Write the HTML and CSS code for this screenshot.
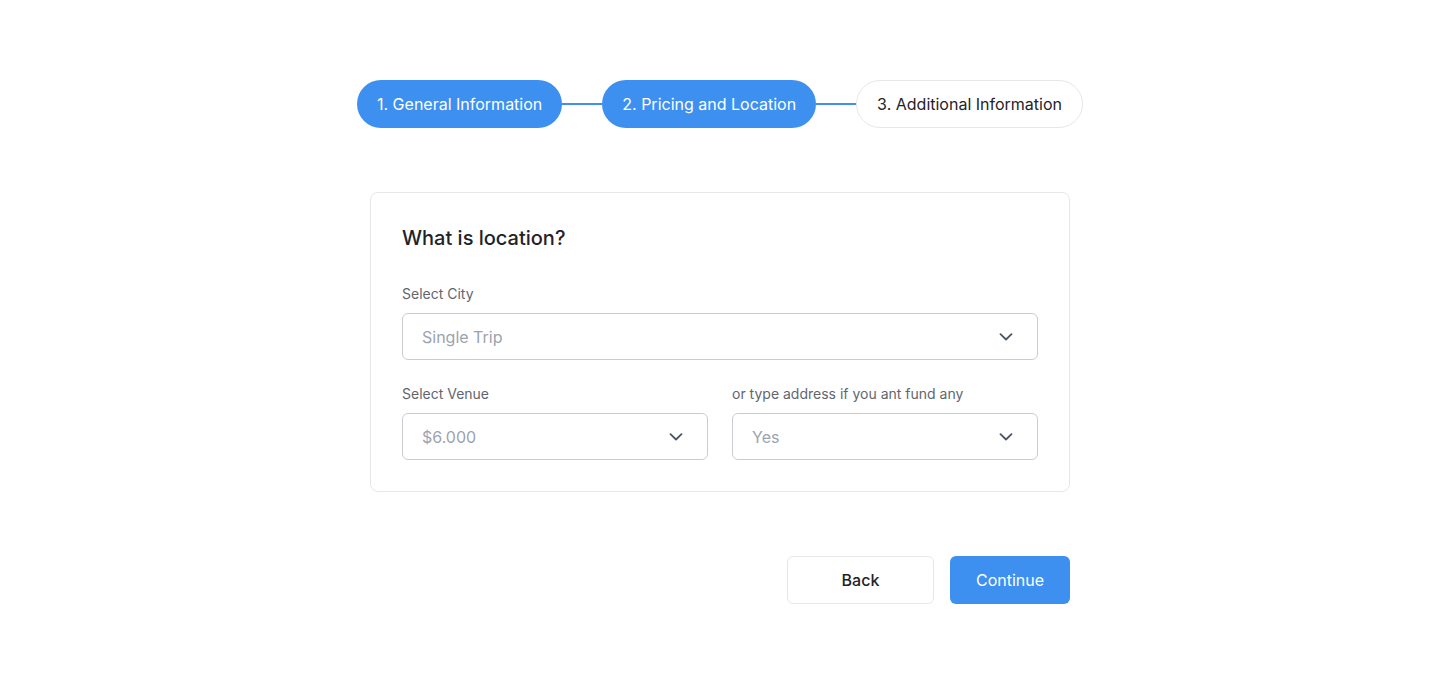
FILE: index.html
```html
<!DOCTYPE html>
<html lang="en">
<head>
<meta charset="utf-8">
<title>Location</title>
<link rel="stylesheet" href="styles.css">
</head>
<body>
<main class="page">
  <nav class="stepper">
    <div class="step step-active">1. General Information</div>
    <div class="connector"></div>
    <div class="step step-active">2. Pricing and Location</div>
    <div class="connector"></div>
    <div class="step step-idle">3. Additional Information</div>
  </nav>

  <section class="card">
    <h2 class="card-title">What is location?</h2>
    <div class="field">
      <label class="label">Select City</label>
      <div class="select">
        <span class="placeholder">Single Trip</span>
        <svg class="chev" width="14" height="8" viewBox="0 0 14 8"><path d="M1.5 1.2 L7 6.5 L12.5 1.2" fill="none" stroke="#4b5563" stroke-width="1.8" stroke-linecap="round" stroke-linejoin="round"/></svg>
      </div>
    </div>
    <div class="row">
      <div class="field">
        <label class="label">Select Venue</label>
        <div class="select">
          <span class="placeholder">$6.000</span>
          <svg class="chev" width="14" height="8" viewBox="0 0 14 8"><path d="M1.5 1.2 L7 6.5 L12.5 1.2" fill="none" stroke="#4b5563" stroke-width="1.8" stroke-linecap="round" stroke-linejoin="round"/></svg>
        </div>
      </div>
      <div class="field">
        <label class="label">or type address if you ant fund any</label>
        <div class="select">
          <span class="placeholder">Yes</span>
          <svg class="chev" width="14" height="8" viewBox="0 0 14 8"><path d="M1.5 1.2 L7 6.5 L12.5 1.2" fill="none" stroke="#4b5563" stroke-width="1.8" stroke-linecap="round" stroke-linejoin="round"/></svg>
        </div>
      </div>
    </div>
  </section>

  <div class="actions">
    <button class="btn btn-back">Back</button>
    <button class="btn btn-primary">Continue</button>
  </div>
</main>
</body>
</html>
```

FILE: styles.css
```css
* { box-sizing: border-box; }
html, body { margin: 0; padding: 0; background: #ffffff; }
body {
  font-family: Inter, "Noto Sans", "Liberation Sans", sans-serif;
  color: #1f2328;
}
.page {
  display: flex;
  flex-direction: column;
  align-items: center;
  padding-top: 80px;
}
.stepper {
  display: flex;
  align-items: center;
}
.step {
  height: 48px;
  display: flex;
  align-items: center;
  padding: 0 20px;
  border-radius: 24px;
  font-size: 16px;
  white-space: nowrap;
}
.step-active {
  background: #3d8ff0;
  color: #ffffff;
}
.step-idle {
  background: #ffffff;
  color: #1f2328;
  border: 1px solid #e5e7eb;
}
.connector {
  width: 40px;
  height: 2px;
  background: #3d8ff0;
}
.card {
  margin-top: 64px;
  width: 700px;
  border: 1px solid #e5e7eb;
  border-radius: 8px;
  padding: 31px;
  display: flex;
  flex-direction: column;
}
.card-title {
  margin: 0 0 32px;
  font-size: 20px;
  line-height: 28px;
  font-weight: 500;
  color: #1f2328;
}
.field {
  display: flex;
  flex-direction: column;
  gap: 9px;
  flex: 1;
}
.label {
  font-size: 14px;
  line-height: 20px;
  color: #5f6670;
}
.row {
  display: flex;
  gap: 24px;
  margin-top: 24px;
}
.select {
  height: 47px;
  border: 1px solid #c9cdd3;
  border-radius: 6px;
  display: flex;
  align-items: center;
  justify-content: space-between;
  padding: 0 24px 0 19px;
}
.placeholder {
  font-size: 16px;
  color: #9ca3af;
}
.chev { display: block; }
.actions {
  margin-top: 64px;
  width: 700px;
  display: flex;
  justify-content: flex-end;
  gap: 16px;
}
.btn {
  height: 48px;
  border-radius: 6px;
  font-family: inherit;
  font-size: 16px;
  cursor: pointer;
}
.btn-back {
  width: 147px;
  background: #ffffff;
  border: 1px solid #e5e7eb;
  color: #1f2328;
  font-weight: 500;
}
.btn-primary {
  width: 120px;
  background: #3d8ff0;
  border: none;
  color: #ffffff;
}
```
